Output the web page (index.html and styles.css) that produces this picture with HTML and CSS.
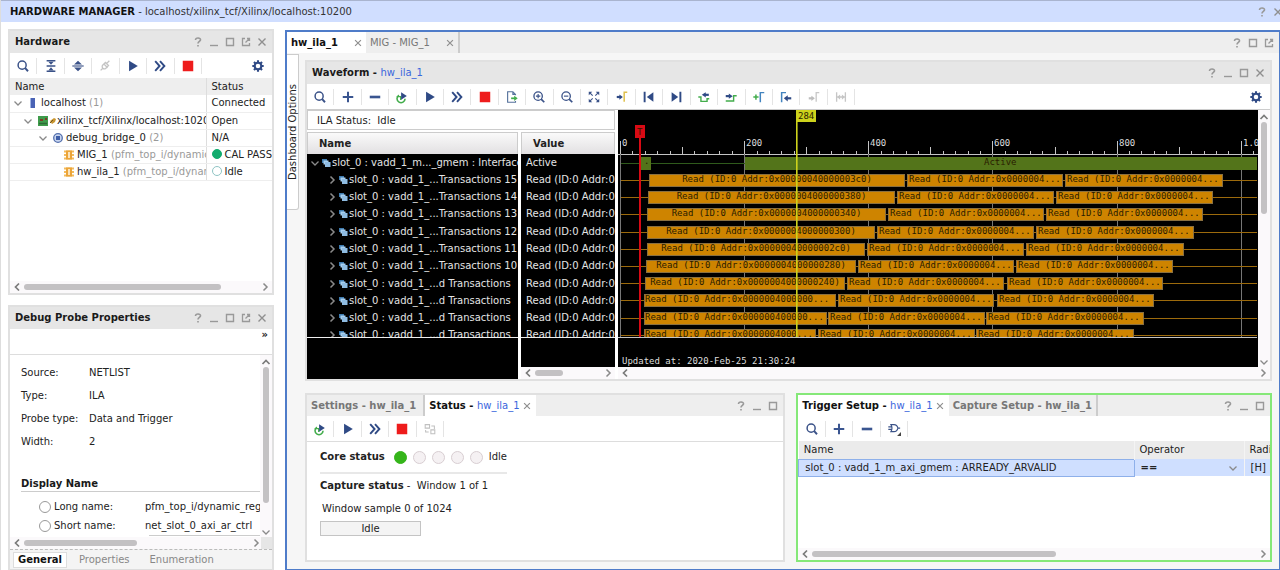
FILE: index.html
```html
<!DOCTYPE html>
<html lang="en">
<head>
    <meta charset="UTF-8">
    <meta name="viewport" content="width=device-width, initial-scale=1.0">
    <title>Hardware Manager</title>
    <link rel="stylesheet" href="styles.css">
</head>
<body>
    <svg class="sprite" aria-hidden="true">
        <symbol id="search" viewBox="0 0 16 16"><circle cx="7" cy="7" r="4.6" fill="none" stroke="#3a5288" stroke-width="1.7"/><path d="M10.5 10.5l3.2 3.5" stroke="#3a5288" stroke-width="2.2"/></symbol>
        <symbol id="collapse" viewBox="0 0 16 16"><path d="M3 8h10M3 2h10M3 14h10" stroke="#3a5288" stroke-width="1.6"/><path d="M5 3h6L8 6.6zM5 13h6L8 9.4z" fill="#3a5288"/></symbol>
        <symbol id="expand" viewBox="0 0 16 16"><path d="M1.5 8h13" stroke="#3a5288" stroke-width="1.3"/><path d="M3.5 6.2h9L8 2zM3.5 9.8h9L8 14z" fill="#3a5288"/></symbol>
        <symbol id="link" viewBox="0 0 16 16"><path d="M3 13l2.5-2.5M5 7.5L8.5 4l3.5 3.5L8.5 11C6 12 4 10 5 7.5zM10 5l3-3M7 6l4 4" fill="none" stroke="#c4c4c4" stroke-width="1.5"/></symbol>
        <symbol id="play" viewBox="0 0 16 16"><path d="M3.5 2v12l10-6z" fill="#2f4a85"/></symbol>
        <symbol id="ff" viewBox="0 0 16 16"><path d="M2.5 2.5l5 5.5-5 5.5M8 2.5L13 8l-5 5.5" fill="none" stroke="#2f4a85" stroke-width="2.2"/></symbol>
        <symbol id="stop" viewBox="0 0 16 16"><path d="M2 2h12v12H2z" fill="#ee1c1c"/></symbol>
        <symbol id="gear" viewBox="0 0 16 16"><circle cx="8" cy="8" r="3.8" fill="none" stroke="#2f4a85" stroke-width="2.4"/><path d="M8 1.5V4M8 12v2.5M1.5 8H4M12 8h2.5M3.4 3.4l1.7 1.7M10.9 10.9l1.7 1.7M3.4 12.6l1.7-1.7M10.9 5.1l1.7-1.7" stroke="#2f4a85" stroke-width="2.4"/></symbol>
        <symbol id="plus" viewBox="0 0 16 16"><path d="M8 2v12M2 8h12" stroke="#3a5590" stroke-width="2.3"/></symbol>
        <symbol id="minus" viewBox="0 0 16 16"><path d="M2 8h12" stroke="#3a5590" stroke-width="3"/></symbol>
        <symbol id="rerun" viewBox="0 0 16 16"><path d="M4.5 6A4.6 4.6 0 1 0 11.5 10" fill="none" stroke="#43ad4c" stroke-width="1.8"/><path d="M2 7.5h4.5v4" fill="none" stroke="#43ad4c" stroke-width="1.5"/><path d="M7 2.5V11l6.5-4.2z" fill="#2f4a85"/></symbol>
        <symbol id="export" viewBox="0 0 16 16"><path d="M12 6V5L9 2H3v12h9v-1.5M9 2v3h3" fill="none" stroke="#56729c" stroke-width="1.3"/><path d="M7 9.5h5" stroke="#43ad4c" stroke-width="2"/><path d="M10.5 6.5l4 3-4 3z" fill="#43ad4c"/></symbol>
        <symbol id="zoomin" viewBox="0 0 16 16"><circle cx="7" cy="7" r="4.8" fill="none" stroke="#3a5288" stroke-width="1.5"/><path d="M10.5 10.5L14 14" stroke="#3a5288" stroke-width="2"/><path d="M4.5 7h5M7 4.5v5" stroke="#3a5288" stroke-width="1.3"/></symbol>
        <symbol id="zoomout" viewBox="0 0 16 16"><circle cx="7" cy="7" r="4.8" fill="none" stroke="#3a5288" stroke-width="1.5"/><path d="M10.5 10.5L14 14" stroke="#3a5288" stroke-width="2"/><path d="M4.5 7h5" stroke="#3a5288" stroke-width="1.3"/></symbol>
        <symbol id="fit" viewBox="0 0 16 16"><path d="M2 6V2h4zM10 2h4v4zM14 10v4h-4zM6 14H2v-4z" fill="#3a5288"/><path d="M3 3l3.5 3.5M13 3L9.5 6.5M13 13L9.5 9.5M3 13l3.5-3.5" stroke="#3a5288" stroke-width="1.3"/></symbol>
        <symbol id="gocursor" viewBox="0 0 16 16"><path d="M2 8h4" stroke="#2f4a85" stroke-width="2.5"/><path d="M5 5l4 3-4 3z" fill="#2f4a85"/><path d="M10.5 13.5v-11H14" fill="none" stroke="#dfc04c" stroke-width="1.7"/></symbol>
        <symbol id="first" viewBox="0 0 16 16"><path d="M3 2v12" stroke="#2f4a85" stroke-width="2.2"/><path d="M13 2.5v11L5.5 8z" fill="#2f4a85"/></symbol>
        <symbol id="last" viewBox="0 0 16 16"><path d="M13 2v12" stroke="#2f4a85" stroke-width="2.2"/><path d="M3 2.5v11L10.5 8z" fill="#2f4a85"/></symbol>
        <symbol id="prevedge" viewBox="0 0 16 16"><path d="M1.5 8h3v5h7V10H14" fill="none" stroke="#43ad4c" stroke-width="1.6"/><path d="M9 5.5h4.5" stroke="#2f4a85" stroke-width="2.5"/><path d="M10 2.5l-4.5 3 4.5 3z" fill="#2f4a85"/></symbol>
        <symbol id="nextedge" viewBox="0 0 16 16"><path d="M2 12.5h9v-6h3.5" fill="none" stroke="#43ad4c" stroke-width="1.6"/><path d="M2 7h4" stroke="#2f4a85" stroke-width="2.5"/><path d="M5.5 4L10 7l-4.5 3z" fill="#2f4a85"/></symbol>
        <symbol id="addmark" viewBox="0 0 16 16"><path d="M1.5 8h6M4.5 5v6" stroke="#43ad4c" stroke-width="1.7"/><path d="M9.5 14V3H14" fill="none" stroke="#4384bf" stroke-width="1.7"/></symbol>
        <symbol id="gomark" viewBox="0 0 16 16"><path d="M3 14V3h5" fill="none" stroke="#4384bf" stroke-width="1.7"/><path d="M9 9.5h5" stroke="#2f4a85" stroke-width="2.5"/><path d="M10 6L5.5 9.5 10 13z" fill="#2f4a85"/></symbol>
        <symbol id="delmark" viewBox="0 0 16 16"><path d="M2 9.5h4" stroke="#bdbdbd" stroke-width="2.5"/><path d="M5 6.5l4 3-4 3z" fill="#bdbdbd"/><path d="M10.5 13.5V3H14" fill="none" stroke="#c8c8c8" stroke-width="1.5"/></symbol>
        <symbol id="span" viewBox="0 0 16 16"><path d="M3 2.5v11M13 2.5v11M4 8h8" fill="none" stroke="#c6c6c6" stroke-width="1.5"/><path d="M7 5L3.5 8 7 11zM9 5l3.5 3L9 11z" fill="#c6c6c6"/></symbol>
        <symbol id="swap" viewBox="0 0 16 16"><path d="M2.5 3h5v4h-5zM9 9h4.5v4.5H9zM9.5 4.5H13V8M6.5 11.5H3V9" fill="none" stroke="#c0c0c0" stroke-width="1.2"/></symbol>
        <symbol id="gate" viewBox="0 0 16 16"><path d="M4.5 3H8c2.5 0 4 2 4.5 4-.5 2-2 4-4.5 4H4.5c1.5-2.5 1.5-5.5 0-8zM1.5 5.5h4M1.5 8.5h4M12.5 7H15" fill="none" stroke="#3a5288" stroke-width="1.3"/><path d="M16 11.5V16h-4.5z" fill="#444"/></symbol>
        <symbol id="help" viewBox="0 0 12 12"><path d="M3.5 4c0-3 5.5-2.5 5 0C8.2 5.3 6 5.5 6 7.5M6 9v1.6" fill="none" stroke="#999" stroke-width="1.6"/></symbol>
        <symbol id="min" viewBox="0 0 12 12"><path d="M2 9.5h8" stroke="#999" stroke-width="1.4"/></symbol>
        <symbol id="max" viewBox="0 0 12 12"><path d="M2.5 2.5h7v7h-7z" fill="none" stroke="#999" stroke-width="1.4"/></symbol>
        <symbol id="float" viewBox="0 0 12 12"><path d="M5 2.5H2.5v7h7V7M5.5 6.5L9 3M7 2.5h2.5V5" fill="none" stroke="#999" stroke-width="1.3"/></symbol>
        <symbol id="close" viewBox="0 0 12 12"><path d="M2.5 2.5l7 7M9.5 2.5l-7 7" stroke="#8f8f8f" stroke-width="1.4"/></symbol>
        <symbol id="down" viewBox="0 0 10 10"><path d="M1.5 3.5L5 7l3.5-3.5" fill="none" stroke="#8a8a8a" stroke-width="1.3"/></symbol>
        <symbol id="up" viewBox="0 0 10 10"><path d="M1.5 7L5 3.5 8.5 7" fill="none" stroke="#7a7a7a" stroke-width="1.7"/></symbol>
        <symbol id="left" viewBox="0 0 10 10"><path d="M7 1.5L3.5 5 7 8.5" fill="none" stroke="#7a7a7a" stroke-width="1.7"/></symbol>
        <symbol id="right" viewBox="0 0 10 10"><path d="M3.5 1.5L7 5 3.5 8.5" fill="none" stroke="#8a8a8a" stroke-width="1.5"/></symbol>
        <symbol id="server" viewBox="0 0 12 12"><path d="M4 1h4v10H4z" fill="#4a63b5"/><path d="M3.5 1v10" stroke="#9fb4e4"/></symbol>
        <symbol id="board" viewBox="0 0 12 12"><path d="M1 1h10v10H1z" fill="#3f9b4b"/><path d="M3 4h3v2H3zM8 3h2v2H8z" fill="#7c3b26"/><path d="M2 8.5h8" stroke="#2c6a36" stroke-width="1.5"/></symbol>
        <symbol id="plug" viewBox="0 0 8 8"><path d="M1 4l4-3 2 1-1 3-3 2z" fill="#c8952e"/><path d="M1 6l3-3" stroke="#6d5322"/></symbol>
        <symbol id="core" viewBox="0 0 12 12"><circle cx="6" cy="6" r="4.3" fill="#c9d6f0" stroke="#5470ad" stroke-width="1.3"/><path d="M4 4h4v4H4z" fill="#3f5fa8"/></symbol>
        <symbol id="ila" viewBox="0 0 12 12"><path d="M1 1.5h10v2H1zM1 5h10v2H1zM1 8.5h10v2H1z" fill="#f3bb5c"/><path d="M3 1.5h6v9H3z" fill="#eba53a"/><path d="M6 3v6" stroke="#fff3dc" stroke-width="1.6"/></symbol>
        <symbol id="bus" viewBox="0 0 10 10"><path d="M1 1h5v4H1z" fill="#3f7cb0"/><path d="M2.5 2.5h5v4h-5z" fill="#a9d0f0"/><path d="M4 4h5.5v5H4z" fill="#8fbce2"/></symbol>
    </svg>

    <header class="titlebar">
        <h1><b>HARDWARE MANAGER</b> - localhost/xilinx_tcf/Xilinx/localhost:10200</h1>
        <div class="win-buttons">
            <button aria-label="Help"><svg><use href="#help"/></svg></button>
            <button aria-label="Close"><svg><use href="#close"/></svg></button>
        </div>
    </header>

    <div class="workspace">
        <aside class="sidebar">
            <section class="panel hardware">
                <div class="panel-header">
                    <h2>Hardware</h2>
                    <div class="win-buttons">
                        <button aria-label="Help"><svg><use href="#help"/></svg></button>
                        <button aria-label="Minimize"><svg><use href="#min"/></svg></button>
                        <button aria-label="Maximize"><svg><use href="#max"/></svg></button>
                        <button aria-label="Float"><svg><use href="#float"/></svg></button>
                        <button aria-label="Close"><svg><use href="#close"/></svg></button>
                    </div>
                </div>
                <div class="toolbar">
                    <div class="tools tools-7" data-tools="search collapse expand link play ff stop"></div>
                    <button class="settings" aria-label="Settings"><svg><use href="#gear"/></svg></button>
                </div>
                <table class="hw-table">
                    <thead>
                        <tr><th>Name</th><th>Status</th></tr>
                    </thead>
                    <tbody>
                        <tr>
                            <td><div class="node"><svg class="arrow"><use href="#down"/></svg><svg class="type"><use href="#server"/></svg>localhost <span class="dim">(1)</span></div></td>
                            <td>Connected</td>
                        </tr>
                        <tr>
                            <td><div class="node level-1"><svg class="arrow"><use href="#down"/></svg><svg class="type board"><use href="#board"/></svg><svg class="plug"><use href="#plug"/></svg>xilinx_tcf/Xilinx/localhost:1020</div></td>
                            <td>Open</td>
                        </tr>
                        <tr>
                            <td><div class="node level-2"><svg class="arrow"><use href="#down"/></svg><svg class="type"><use href="#core"/></svg>debug_bridge_0 <span class="dim">(2)</span></div></td>
                            <td>N/A</td>
                        </tr>
                        <tr>
                            <td><div class="node level-3"><svg class="type"><use href="#ila"/></svg>MIG_1 <span class="dim">(pfm_top_i/dynamic_</span></div></td>
                            <td><span class="dot pass"></span>CAL PASS</td>
                        </tr>
                        <tr>
                            <td><div class="node level-3"><svg class="type"><use href="#ila"/></svg>hw_ila_1 <span class="dim">(pfm_top_i/dynam</span></div></td>
                            <td><span class="dot"></span>Idle</td>
                        </tr>
                    </tbody>
                </table>
                <div class="hscroll"><svg><use href="#left"/></svg><div class="track"><div class="thumb hw-thumb"></div></div><svg><use href="#right"/></svg></div>
            </section>

            <section class="panel probe">
                <div class="panel-header">
                    <h2>Debug Probe Properties</h2>
                    <div class="win-buttons">
                        <button aria-label="Help"><svg><use href="#help"/></svg></button>
                        <button aria-label="Minimize"><svg><use href="#min"/></svg></button>
                        <button aria-label="Maximize"><svg><use href="#max"/></svg></button>
                        <button aria-label="Float"><svg><use href="#float"/></svg></button>
                        <button aria-label="Close"><svg><use href="#close"/></svg></button>
                    </div>
                </div>
                <div class="toolbar more"><button>»</button></div>
                <div class="probe-body">
                    <div class="probe-main">
                        <dl class="props">
                            <dt>Source:</dt><dd>NETLIST</dd>
                            <dt>Type:</dt><dd>ILA</dd>
                            <dt>Probe type:</dt><dd>Data and Trigger</dd>
                            <dt>Width:</dt><dd>2</dd>
                        </dl>
                        <h3>Display Name</h3>
                        <div class="name-row"><input type="radio" name="display" id="long"><label for="long">Long name:</label><span>pfm_top_i/dynamic_reg</span></div>
                        <div class="name-row"><input type="radio" name="display" id="short"><label for="short">Short name:</label><span>net_slot_0_axi_ar_ctrl</span></div>
                        <div class="custom-box"></div>
                    </div>
                    <div class="vscroll"><svg><use href="#up"/></svg><div class="track"><div class="thumb probe-vthumb"></div></div><svg><use href="#down"/></svg></div>
                </div>
                <div class="hscroll cornered"><svg><use href="#left"/></svg><div class="track"><div class="thumb probe-thumb"></div></div><svg><use href="#right"/></svg></div>
                <nav class="bottom-tabs">
                    <button class="active">General</button>
                    <button>Properties</button>
                    <button>Enumeration</button>
                </nav>
            </section>
        </aside>

        <main class="dashboard">
            <div class="tabs main-tabs">
                <div class="tab active"><button>hw_ila_1</button><button class="x" aria-label="Close tab"><svg><use href="#close"/></svg></button></div>
                <div class="tab divided"><button>MIG - MIG_1</button><button class="x" aria-label="Close tab"><svg><use href="#close"/></svg></button></div>
                <div class="win-buttons">
                    <button aria-label="Help"><svg><use href="#help"/></svg></button>
                    <button aria-label="Maximize"><svg><use href="#max"/></svg></button>
                    <button aria-label="Float"><svg><use href="#float"/></svg></button>
                </div>
            </div>
            <div class="dash-body">
                <button class="options-tab">Dashboard Options</button>
                <div class="dash-content">
                    <section class="panel waveform">
                        <div class="panel-header">
                            <h2>Waveform - <a href="#">hw_ila_1</a></h2>
                            <div class="win-buttons">
                                <button aria-label="Help"><svg><use href="#help"/></svg></button>
                                <button aria-label="Minimize"><svg><use href="#min"/></svg></button>
                                <button aria-label="Maximize"><svg><use href="#max"/></svg></button>
                                <button aria-label="Close"><svg><use href="#close"/></svg></button>
                            </div>
                        </div>
                        <div class="toolbar">
                            <div class="tools tools-20" data-tools="search plus minus rerun play ff stop export zoomin zoomout fit gocursor first last prevedge nextedge addmark gomark delmark span"></div>
                            <button class="settings" aria-label="Settings"><svg><use href="#gear"/></svg></button>
                        </div>
                        <div class="wave-body">
                            <div class="wave-left">
                                <div class="ila-status">ILA Status:&nbsp; Idle</div>
                                <div class="wave-columns">
                                    <div class="names">
                                        <div class="col-head">Name</div>
                                        <div class="rows"><div class="row-grid" id="names"></div></div>
                                        <div class="rows-foot"></div>
                                    </div>
                                    <div class="values">
                                        <div class="col-head">Value</div>
                                        <div class="rows"><div class="row-grid" id="values"></div></div>
                                        <div class="rows-foot"></div>
                                        <div class="hscroll"><svg><use href="#left"/></svg><div class="track"><div class="thumb value-thumb"></div></div><svg><use href="#right"/></svg></div>
                                    </div>
                                </div>
                            </div>
                            <div class="wave-right">
                                <div class="wave-view">
                                    <svg class="wave" id="wave"></svg>
                                    <div class="vscroll"><svg><use href="#up"/></svg><div class="track"><div class="thumb wave-vthumb"></div></div><svg><use href="#down"/></svg></div>
                                </div>
                                <div class="hscroll"><svg><use href="#left"/></svg><div class="track"></div><svg><use href="#right"/></svg></div>
                            </div>
                        </div>
                    </section>

                    <div class="bottom-row">
                        <section class="panel status">
                            <div class="tabs">
                                <div class="tab divided"><button>Settings - hw_ila_1</button></div>
                                <div class="tab active"><button>Status - <span class="blue">hw_ila_1</span></button><button class="x" aria-label="Close tab"><svg><use href="#close"/></svg></button></div>
                                <div class="win-buttons">
                                    <button aria-label="Help"><svg><use href="#help"/></svg></button>
                                    <button aria-label="Minimize"><svg><use href="#min"/></svg></button>
                                    <button aria-label="Maximize"><svg><use href="#max"/></svg></button>
                                </div>
                            </div>
                            <div class="toolbar">
                                <div class="tools tools-5" data-tools="rerun play ff stop swap"></div>
                            </div>
                            <div class="status-body">
                                <div class="core-status">
                                    <b>Core status</b>
                                    <span class="lamp on"></span><span class="lamp"></span><span class="lamp"></span><span class="lamp"></span><span class="lamp"></span>
                                    <span>Idle</span>
                                </div>
                                <p><b>Capture status</b> -&nbsp; Window 1 of 1</p>
                                <p class="sample">Window sample 0 of 1024</p>
                                <div class="progress">Idle</div>
                            </div>
                        </section>

                        <section class="panel trigger">
                            <div class="tabs">
                                <div class="tab active"><button>Trigger Setup - <span class="blue">hw_ila_1</span></button><button class="x" aria-label="Close tab"><svg><use href="#close"/></svg></button></div>
                                <div class="tab divided"><button>Capture Setup - hw_ila_1</button></div>
                                <div class="win-buttons">
                                    <button aria-label="Help"><svg><use href="#help"/></svg></button>
                                    <button aria-label="Minimize"><svg><use href="#min"/></svg></button>
                                    <button aria-label="Maximize"><svg><use href="#max"/></svg></button>
                                </div>
                            </div>
                            <div class="toolbar">
                                <div class="tools tools-4" data-tools="search plus minus gate"></div>
                            </div>
                            <table class="trigger-table">
                                <thead>
                                    <tr><th>Name</th><th class="op">Operator</th><th class="radix">Radi</th></tr>
                                </thead>
                                <tbody>
                                    <tr>
                                        <td class="picked">slot_0 : vadd_1_m_axi_gmem : ARREADY_ARVALID</td>
                                        <td><div class="op-cell"><select aria-label="Operator"><option>==</option><option>!=</option></select><svg><use href="#down"/></svg></div></td>
                                        <td>[H]</td>
                                    </tr>
                                </tbody>
                            </table>
                            <div class="hscroll"><svg><use href="#left"/></svg><div class="track"><div class="thumb trigger-thumb"></div></div><svg><use href="#right"/></svg></div>
                        </section>
                    </div>
                </div>
            </div>
        </main>
    </div>

    <script>
        const PX_PER_SAMPLE = 0.6208;
        const ORIGIN = 3;
        const ROW_PITCH = 17.2;

        // start/end of the three read bursts of every transaction row, then the first address
        const bursts = [
            [31, 287, 289, 445, 447, 605, '00000040000003c0)'],
            [30, 277, 279, 436, 438, 595, '0000004000000380)'],
            [29, 268, 270, 426, 428, 585, '0000004000000340)'],
            [29, 257, 259, 416, 418, 576, '0000004000000300)'],
            [29, 247, 249, 406, 408, 566, '00000040000002c0)'],
            [28, 238, 240, 396, 398, 555, '0000004000000280)'],
            [27, 227, 229, 386, 389, 545, '0000004000000240)'],
            [26, 218, 220, 376, 379, 536, '0000004000000...'],
            [26, 209, 210, 367, 368, 526, '000000400000...'],
            [26, 198, 200, 357, 358, 516, '0000004000...']
        ];

        function renderTools() {
            document.querySelectorAll('.tools').forEach(el => {
                el.innerHTML = el.dataset.tools.split(' ').map(name =>
                    `<button aria-label="${name}"><svg><use href="#${name}"/></svg></button>`).join('');
            });
        }

        function renderRows() {
            const suffixes = ['Transactions 15', 'Transactions 14', 'Transactions 13', 'Transactions 12',
                'Transactions 11', 'Transactions 10', 'd Transactions', 'd Transactions', 'd Transactions', 'd Transactions'];
            document.getElementById('names').innerHTML =
                '<div class="sig"><svg><use href="#down"/></svg><svg><use href="#bus"/></svg>slot_0 : vadd_1_m..._gmem : Interface</div>' +
                suffixes.map(s =>
                    `<div class="sig child"><svg><use href="#right"/></svg><svg><use href="#bus"/></svg>slot_0 : vadd_1_...${s}</div>`).join('');
            document.getElementById('values').innerHTML =
                '<div>Active</div>' + suffixes.map(() => '<div>Read (ID:0 Addr:0x</div>').join('');
        }

        function line(x1, y1, x2, y2, cls) {
            return `<line x1="${x1}" y1="${y1}" x2="${x2}" y2="${y2}" class="${cls}"/>`;
        }

        function rect(x, y, w, h, cls) {
            return `<rect x="${x}" y="${y}" width="${w}" height="${h}" class="${cls}"/>`;
        }

        function text(x, y, str, cls) {
            return `<text x="${x}" y="${y}" class="${cls || ''}">${str}</text>`;
        }

        function renderWave() {
            let out = '<clipPath id="rowsClip"><rect x="0" y="0" width="100%" height="227"/></clipPath>';
            out += line(0, 44.5, '100%', 44.5, 'axis');

            // ruler and grid
            for (let s = 0; s <= 1020; s += 20) {
                const x = Math.round(ORIGIN - 1 + s * PX_PER_SAMPLE) + 0.5;
                if (s % 200 === 0) {
                    out += line(x, 31, x, 227, 'grid');
                    out += line(x, 31, x, 44, 'axis');
                    out += text(x + 1.5, 36, s === 1000 ? '1.0' : s, 'light');
                } else {
                    out += line(x, s % 100 === 0 ? 37 : 41, x, 44, 'axis');
                }
            }

            // interface row
            out += line(3, 53.5, 128, 53.5, 'idle-green');
            out += rect(23, 47, 10, 13, 'green') + text(26, 54, '.');
            out += rect(127, 47, 512, 13, 'green') + text(366, 55, 'Active');

            // transaction rows
            out += '<g clip-path="url(#rowsClip)">';
            bursts.forEach((b, i) => {
                const y = Math.round(64 + i * ROW_PITCH);
                out += line(3, y + 6.5, 639, y + 6.5, 'idle-orange');
                for (let k = 0; k < 6; k += 2) {
                    out += rect(b[k] + 0.5, y + 0.5, b[k + 1] - b[k] - 1, 12, 'orange');
                }
                const first = 'Read (ID:0 Addr:0x' + b[6];
                if (i < 7) {
                    out += text((b[0] + b[1]) / 2, y + 8, first, 'mid');
                } else {
                    out += text(b[0] + 1, y + 8, first);
                }
                out += text(b[2] + 2, y + 8, 'Read (ID:0 Addr:0x0000004...');
                out += text(b[4] + 2, y + 8, 'Read (ID:0 Addr:0x0000004...');
            });
            out += '</g>';
            out += line(0, 227.5, 639, 227.5, 'axis');

            // trigger and cursor
            out += rect(21, 28, 2, 199, 'red') + rect(17, 15, 10, 13, 'red') + text(19, 25, 'T');
            out += rect(178, 0, 1.6, 227, 'yellow') + rect(178, 0, 20, 12, 'yellow') + text(180, 9, '284');
            out += text(4, 254, 'Updated at: 2020-Feb-25 21:30:24', 'light');
            document.getElementById('wave').innerHTML = out;
        }

        renderTools();
        renderRows();
        renderWave();
    </script>
</body>
</html>
```

FILE: styles.css
```css
* {
    margin: 0;
    padding: 0;
    box-sizing: border-box;
}

body {
    font-family: "DejaVu Sans", sans-serif;
    font-size: 10px;
    line-height: 12px;
    color: #222;
    background: #fff;
    height: 100vh;
    display: flex;
    flex-direction: column;
    overflow: hidden;
    border-left: 1px solid #ddd;
}

button, select {
    font: inherit;
    color: inherit;
    background: none;
    border: none;
}

h1, h2, h3 {
    font-size: 10px;
    font-weight: bold;
    color: #1a1a1a;
}

a, .blue {
    color: #3a66dd;
    font-weight: normal;
    text-decoration: none;
}

svg {
    display: block;
    flex: none;
}

.sprite {
    display: none;
}

.titlebar {
    display: flex;
    align-items: center;
    justify-content: space-between;
    height: 22px;
    flex: none;
    padding-left: 9px;
    background: #d0deff;
    border-top: 1px solid #a9b4cf;
}

.titlebar h1 {
    font-weight: normal;
    color: #333;
}

.titlebar b {
    color: #111;
}

.win-buttons {
    display: flex;
    gap: 4px;
    margin-left: auto;
    padding-right: 4px;
}

.win-buttons svg {
    width: 12px;
    height: 12px;
}

.titlebar .win-buttons {
    margin-right: -4px;
    padding-right: 0;
}

.workspace {
    flex: 1;
    min-height: 0;
    display: flex;
    gap: 11px;
    padding: 7px 0 0 7px;
}

.sidebar {
    width: 266px;
    flex: none;
    display: flex;
    flex-direction: column;
    gap: 10px;
}

.panel {
    display: flex;
    flex-direction: column;
    background: #fff;
    border: 2px solid #e0e0e0;
    min-width: 0;
}

.hardware {
    height: 266px;
    flex: none;
}

.panel-header {
    display: flex;
    align-items: center;
    height: 22px;
    flex: none;
    padding-left: 5px;
    background: #e6e6e6;
}

.toolbar {
    display: flex;
    align-items: center;
    justify-content: space-between;
    height: 25px;
    flex: none;
}

.tools {
    display: flex;
}

.tools button {
    flex: 1;
    height: 16px;
    display: flex;
    align-items: center;
    justify-content: center;
    border-right: 1px solid #e4e4e4;
}

.tools svg, .settings svg {
    width: 14px;
    height: 14px;
}

.tools-4 {
    width: 110px;
}

.tools-5 {
    width: 137px;
}

.tools-7 {
    width: 192px;
}

.tools-20 {
    width: 548px;
}

.settings {
    padding: 0 7px;
}

.hw-table {
    width: 100%;
    table-layout: fixed;
    border-collapse: collapse;
}

.hw-table th {
    height: 17px;
    padding-left: 5px;
    text-align: left;
    font-weight: normal;
    background: #eee;
}

.hw-table th:first-child {
    width: 196px;
}

.hw-table td {
    height: 17px;
    padding-left: 5px;
    white-space: nowrap;
    overflow: hidden;
    border-bottom: 1px solid #eee;
}

.hw-table th + th, .hw-table td + td {
    border-left: 1px solid #ddd;
}

.hw-table td:first-child {
    padding-left: 3px;
}

.node {
    display: flex;
    align-items: center;
    overflow: hidden;
    white-space: pre;
}

.arrow {
    width: 10px;
    height: 10px;
    margin-right: 4px;
}

.type {
    width: 12px;
    height: 12px;
    margin-right: 2px;
}

.board {
    margin-right: 0;
}

.plug {
    width: 8px;
    height: 8px;
}

.level-1 {
    padding-left: 10px;
}

.level-2 {
    padding-left: 25px;
}

.level-3 {
    padding-left: 50px;
}

.dim {
    color: #999;
}

.dot {
    display: inline-block;
    width: 10px;
    height: 10px;
    margin-right: 3px;
    border: 1px solid #8fc4c4;
    border-radius: 50%;
    vertical-align: -1px;
}

.dot.pass {
    background: #12ac6e;
    border-color: #12ac6e;
}

.hscroll {
    display: flex;
    align-items: center;
    height: 12px;
    flex: none;
    margin-top: auto;
    padding: 0 2px;
    background: #fbf9fb;
}

.hscroll svg, .vscroll svg {
    width: 10px;
    height: 10px;
}

.track {
    flex: 1;
    min-width: 0;
    min-height: 0;
}

.hscroll .track {
    margin: 0 2px;
}

.thumb {
    height: 6px;
    border-radius: 3px;
    background: #c3c1c3;
}

.hw-thumb {
    width: 84%;
}

.probe-thumb {
    width: 50%;
}

.value-thumb {
    width: 42%;
}

.trigger-thumb {
    width: 55%;
}

.vscroll {
    width: 12px;
    flex: none;
    display: flex;
    flex-direction: column;
    align-items: center;
    padding: 2px 0 0;
    background: #fbf9fb;
}

.vscroll .thumb {
    width: 6px;
}

.probe-vthumb {
    height: 85%;
}

.wave-vthumb {
    height: 39%;
}

.probe {
    flex: 1;
    min-height: 0;
    border-bottom: none;
}

.more {
    justify-content: flex-end;
    align-items: flex-start;
    height: 26px;
    padding: 0 4px;
    border-bottom: 1px solid #ddd;
}

.more button {
    font-weight: bold;
}

.probe-body {
    flex: 1;
    min-height: 0;
    display: flex;
}

.probe-main {
    flex: 1;
    min-width: 0;
    overflow: hidden;
    padding: 6px 0 0 11px;
}

.props {
    display: grid;
    grid-template-columns: 68px 1fr;
    line-height: 23px;
    margin-bottom: 24px;
}

.probe-main h3 {
    line-height: 14px;
    margin-bottom: 5px;
    border-bottom: 1px solid #ccc;
}

.name-row {
    display: grid;
    grid-template-columns: 15px 91px 1fr;
    align-items: center;
    height: 19px;
    padding-left: 18px;
    white-space: nowrap;
}

.name-row input {
    appearance: none;
    width: 12px;
    height: 12px;
    border: 1px solid #999;
    border-radius: 50%;
}

.custom-box {
    height: 20px;
    margin-left: 128px;
    border-top: 1px solid #ccc;
}

.cornered {
    margin-top: 0;
    padding-right: 0;
    border-right: 11px solid #e6e6e6;
}

.bottom-tabs {
    display: flex;
    align-items: center;
    gap: 4px;
    height: 21px;
    flex: none;
    padding-left: 3px;
    background: #f4f4f4;
    border-top: 1px dashed #bbb;
    border-bottom: 1px solid #ddd;
    color: #888;
}

.bottom-tabs button {
    height: 16px;
    padding: 0 8px;
}

.bottom-tabs .active {
    padding: 0 4px;
    font-weight: bold;
    color: #111;
    background: #fff;
    border: 1px solid #ddd;
}

.dashboard {
    flex: 1;
    min-width: 0;
    display: flex;
    flex-direction: column;
    margin-top: 1px;
    background: #f6f6f6;
    border: 2px solid #4f7cc9;
    border-right-width: 1px;
    border-bottom-width: 1px;
}

.tabs {
    display: flex;
    align-items: center;
    height: 21px;
    flex: none;
    background: #eee;
}

.tab {
    height: 100%;
    display: flex;
    align-items: center;
    gap: 2px;
    padding: 0 4px;
    color: #777;
    font-weight: bold;
}

.tab svg {
    width: 10px;
    height: 10px;
}

.tab.active {
    color: #111;
    background: #fff;
}

.divided {
    border-right: 2px solid #ccc;
}

.main-tabs .tab {
    gap: 15px;
    padding-right: 3px;
}

.main-tabs .divided {
    font-weight: normal;
}

.status .divided {
    padding-right: 7px;
}

.dash-body {
    flex: 1;
    min-height: 0;
    display: flex;
    gap: 6px;
}

.options-tab {
    width: 12px;
    height: 156px;
    margin-top: 1px;
    writing-mode: vertical-rl;
    transform: rotate(180deg);
    background: #fff;
    border: 1px solid #ccc;
    border-right: none;
    border-radius: 3px 0 0 0;
}

.dash-content {
    flex: 1;
    min-width: 0;
    display: flex;
    flex-direction: column;
    gap: 12px;
    padding: 7px 7px 7px 0;
}

.waveform {
    height: 321px;
    flex: none;
}

.wave-body {
    flex: 1;
    min-height: 0;
    display: flex;
    gap: 3px;
    border-top: 1px solid #ccc;
}

.wave-left {
    width: 308px;
    flex: none;
    display: flex;
    flex-direction: column;
    gap: 2px;
}

.ila-status {
    height: 20px;
    padding-left: 9px;
    line-height: 20px;
    border: 1px solid #ccc;
}

.wave-columns {
    flex: 1;
    min-height: 0;
    display: flex;
    gap: 3px;
}

.names, .values {
    display: flex;
    flex-direction: column;
    min-width: 0;
}

.names {
    flex: 1;
}

.values {
    width: 94px;
}

.col-head {
    height: 22px;
    flex: none;
    padding-left: 11px;
    line-height: 21px;
    font-weight: bold;
    background: linear-gradient(#fafafa, #e2e0e2);
    border: 1px solid #ccc;
    border-bottom: none;
}

.rows {
    height: 184px;
    flex: none;
    overflow: hidden;
    color: #e4e4e4;
    background: #000;
    border-bottom: 1px solid #eee;
}

.row-grid {
    height: 190px;
    display: grid;
    grid-auto-rows: 1fr;
    align-items: center;
    white-space: nowrap;
}

.values .row-grid {
    padding-left: 5px;
}

.sig {
    display: flex;
    align-items: center;
    gap: 1px;
    padding-left: 3px;
}

.sig svg {
    width: 10px;
    height: 10px;
}

.child {
    padding-left: 20px;
}

.rows-foot {
    flex: 1;
    background: #000;
}

.wave-right {
    flex: 1;
    min-width: 0;
    display: flex;
    flex-direction: column;
}

.wave-view {
    flex: 1;
    min-height: 0;
    display: flex;
}

.wave {
    flex: 1;
    min-width: 0;
    height: 100%;
    background: #000;
    font-family: "DejaVu Sans Mono", monospace;
    font-size: 9px;
}

.wave text {
    fill: #2a1c00;
}

.wave .light {
    fill: #ddd;
}

.wave .mid {
    text-anchor: middle;
}

.axis {
    stroke: #c4c4c4;
}

.grid {
    stroke: #777;
}

.idle-green {
    stroke: #2f5a1c;
}

.idle-orange {
    stroke: #9c6a0c;
}

.green {
    fill: #53741a;
}

.orange {
    fill: #ce8400;
    stroke: #8a7040;
}

.red {
    fill: #d80a14;
}

.yellow {
    fill: #cdd21c;
}

.bottom-row {
    flex: 1;
    min-height: 0;
    display: flex;
    gap: 11px;
}

.bottom-row .status {
    flex: 102 1 0;
}

.bottom-row .trigger {
    flex: 101 1 0;
    border-color: #85e878;
}

.status .toolbar {
    height: 26px;
    border-bottom: 1px solid #ddd;
}

.status-body {
    padding: 7px 13px;
}

.core-status {
    width: 187px;
    height: 25px;
    display: flex;
    align-items: center;
    gap: 6px;
    margin-bottom: 6px;
    padding-bottom: 7px;
    white-space: nowrap;
    border-bottom: 2px solid #e8e8e8;
}

.core-status b {
    width: 68px;
}

.lamp {
    width: 13px;
    height: 13px;
    flex: none;
    border: 1px solid #d8ced2;
    border-radius: 50%;
    background: #f5f1f3;
}

.lamp.on {
    background: #35b51a;
    border-color: #35b51a;
}

.status-body p {
    margin-bottom: 11px;
}

.status-body .sample {
    padding-left: 2px;
    margin-bottom: 6px;
}

.progress {
    width: 101px;
    height: 15px;
    line-height: 13px;
    text-align: center;
    background: #f4f4f4;
    border: 1px solid #c4c4c4;
}

.trigger-table {
    width: 100%;
    table-layout: fixed;
    border-collapse: collapse;
}

.trigger-table th {
    height: 18px;
    padding-left: 5px;
    text-align: left;
    font-weight: normal;
    background: #ebebeb;
    overflow: hidden;
}

.trigger-table td {
    height: 17px;
    padding-left: 6px;
    white-space: nowrap;
    background: #cfdfff;
}

.trigger-table th + th, .trigger-table td + td {
    border-left: 1px solid #f4f4f4;
}

.trigger-table .picked {
    border: 1px solid #8eb0ea;
}

.op {
    width: 110px;
}

.radix {
    width: 26px;
}

.op-cell {
    display: flex;
    align-items: center;
}

.op-cell select {
    flex: 1;
    appearance: none;
    font-weight: bold;
}

.op-cell svg {
    width: 10px;
    height: 10px;
    margin-right: 6px;
}
```
